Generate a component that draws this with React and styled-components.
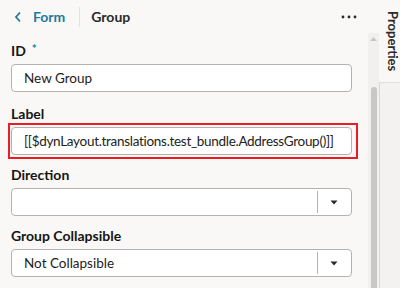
import React from "react";
import styled, { createGlobalStyle } from "styled-components";

const Global = createGlobalStyle`
  html, body { margin: 0; padding: 0; background: #f9f8f6; }
  body { font-family: Lato, "Noto Sans", sans-serif; color: #161513; }
  * { box-sizing: border-box; }
`;

const Page = styled.div`
  display: flex;
  width: 400px;
  height: 288px;
  overflow: hidden;
  background: #f9f8f6;
`;

const Main = styled.div`
  display: flex;
  flex-direction: column;
  width: 379px;
  flex: none;
  min-width: 0;
`;

const Header = styled.div`
  display: flex;
  align-items: center;
  height: 33px;
  padding: 0 0 0 14px;
  flex: none;
`;

const Back = styled.div`
  display: flex;
  align-items: center;
  gap: 11px;
  color: #227b9e;
  font-size: 14px;
  font-weight: 700;
  padding-right: 14px;
  border-right: 1px solid #e4e2df;
  height: 20px;
`;

const Title = styled.div`
  font-size: 14px;
  font-weight: 700;
  color: #2b2a28;
  padding-left: 11px;
  flex: 1;
`;

const More = styled.div`
  width: 40px;
  display: flex;
  justify-content: center;
  margin-right: 10px;
`;

const Body = styled.div`
  display: flex;
  flex: 1;
  min-height: 0;
`;

const Content = styled.div`
  flex: 1;
  min-width: 0;
  padding: 9px 16px 0 11px;
  display: flex;
  flex-direction: column;
`;

const Field = styled.div`
  display: flex;
  flex-direction: column;
  margin-bottom: ${(p) => (p.$first ? 13 : 11)}px;
`;

const Label = styled.div`
  font-size: 14px;
  font-weight: 700;
  line-height: 18px;
  height: 18px;
  margin-bottom: 4px;
  display: flex;
  gap: 6px;
`;

const Req = styled.span`
  color: #227b9e;
  font-size: 12px;
  line-height: 14px;
`;

const Highlight = styled.div`
  margin: -4px -6px -4px -3px;
  padding: 2px 4px 2px 1px;
  border: 2px solid #ea1c24;
`;

const Box = styled.div`
  height: 28px;
  min-width: 0;
  background: #fff;
  border: 1px solid #b5b3b0;
  border-radius: 4px;
  display: flex;
  align-items: center;
  font-size: 13.5px;
  letter-spacing: ${(p) => (p.$tight ? "-0.3px" : "0")};
  color: #232220;
  padding-left: 12px;
  white-space: nowrap;
  overflow: hidden;
`;

const BoxText = styled.span`
  flex: 1;
`;

const Drop = styled.div`
  width: 34px;
  align-self: stretch;
  display: flex;
  align-items: center;
  justify-content: center;
  position: relative;
  &::before {
    content: "";
    position: absolute;
    left: 0;
    top: 2px;
    bottom: 2px;
    width: 1px;
    background: #b5b3b0;
  }
`;

const Scroll = styled.div`
  width: 11px;
  flex: none;
  background: #f1f0ef;
  display: flex;
  flex-direction: column;
  align-items: center;
`;

const ScrollBtn = styled.div`
  height: 12px;
  display: flex;
  align-items: center;
  justify-content: center;
`;

const Thumb = styled.div`
  width: 6px;
  margin-top: 42px;
  flex: 1;
  background: #c8c7c5;
  border-radius: 3px 3px 0 0;
`;

const Side = styled.div`
  flex: 1;
  display: flex;
  flex-direction: column;
`;

const Tab = styled.div`
  height: 82px;
  display: flex;
  justify-content: center;
  padding-top: 11px;
  padding-left: 6px;
`;

const TabText = styled.div`
  writing-mode: vertical-rl;
  font-size: 13px;
  font-weight: 700;
  color: #2b2a28;
`;

const SidePanel = styled.div`
  flex: 1;
  border-left: 1px solid #d9d8d6;
  border-top: 1px solid #e2e1df;
  background: #f3f2f1;
`;

const Chevron = () => (
  <svg width="8" height="12" viewBox="0 0 8 12">
    <path d="M6 1.5 L2 6 L6 10.5" fill="none" stroke="#227b9e" strokeWidth="1.8" />
  </svg>
);

const Dots = () => (
  <svg width="16" height="4" viewBox="0 0 16 4">
    <circle cx="2" cy="2" r="1.4" fill="#2b2a28" />
    <circle cx="8" cy="2" r="1.4" fill="#2b2a28" />
    <circle cx="14" cy="2" r="1.4" fill="#2b2a28" />
  </svg>
);

const Caret = () => (
  <svg width="8" height="5" viewBox="0 0 8 5">
    <path d="M0.5 0.5 H7.5 L4 4.5 Z" fill="#2b2a28" />
  </svg>
);

const Select = ({ value }) => (
  <Box>
    <BoxText>{value}</BoxText>
    <Drop>
      <Caret />
    </Drop>
  </Box>
);

export default function App() {
  return (
    <Page>
      <Global />
      <Main>
        <Header>
          <Back>
            <Chevron />
            Form
          </Back>
          <Title>Group</Title>
          <More>
            <Dots />
          </More>
        </Header>
        <Body>
          <Content>
            <Field $first>
              <Label>
                ID <Req>*</Req>
              </Label>
              <Box>New Group</Box>
            </Field>
            <Field>
              <Label>Label</Label>
              <Highlight>
                <Box $tight>[[$dynLayout.translations.test_bundle.AddressGroup()]]</Box>
              </Highlight>
            </Field>
            <Field>
              <Label>Direction</Label>
              <Select value="" />
            </Field>
            <Field>
              <Label>Group Collapsible</Label>
              <Select value="Not Collapsible" />
            </Field>
          </Content>
          <Scroll>
            <ScrollBtn>
              <svg width="7" height="4" viewBox="0 0 7 4">
                <path d="M0 4 L3.5 0 L7 4 Z" fill="#c8c7c5" />
              </svg>
            </ScrollBtn>
            <Thumb />
          </Scroll>
        </Body>
      </Main>
      <Side>
        <Tab>
          <TabText>Properties</TabText>
        </Tab>
        <SidePanel />
      </Side>
    </Page>
  );
}
